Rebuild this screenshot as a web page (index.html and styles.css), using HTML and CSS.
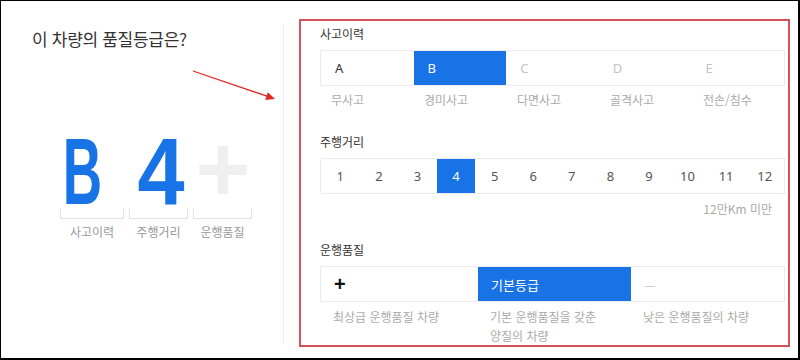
FILE: index.html
```html
<!DOCTYPE html>
<html lang="ko">
<head>
<meta charset="utf-8">
<title>품질등급</title>
<link rel="stylesheet" href="styles.css">
</head>
<body>
<div class="frame">
  <div class="left">
    <div class="title">이 차량의 품질등급은?</div>
    <div class="grades">
      <div class="grade g1">
        <div class="glyph"><span class="ch ch-b">B</span></div>
        <div class="bracket"></div>
        <div class="glabel">사고이력</div>
      </div>
      <div class="grade g2">
        <div class="glyph"><span class="ch ch-4">4</span></div>
        <div class="bracket"></div>
        <div class="glabel">주행거리</div>
      </div>
      <div class="grade g3">
        <div class="glyph"><span class="ch ch-plus">+</span></div>
        <div class="bracket"></div>
        <div class="glabel">운행품질</div>
      </div>
    </div>
  </div>
  <div class="divider"></div>
  <div class="panel">
    <div class="ph">사고이력</div>
    <div class="grid g5">
      <div class="cell dark">A</div>
      <div class="cell on">B</div>
      <div class="cell light">C</div>
      <div class="cell light">D</div>
      <div class="cell light">E</div>
    </div>
    <div class="labs g5">
      <div>무사고</div>
      <div>경미사고</div>
      <div>다면사고</div>
      <div>골격사고</div>
      <div>전손/침수</div>
    </div>

    <div class="ph ph2">주행거리</div>
    <div class="grid g12">
      <div class="num">1</div><div class="num">2</div><div class="num">3</div><div class="num on">4</div>
      <div class="num">5</div><div class="num">6</div><div class="num">7</div><div class="num">8</div>
      <div class="num">9</div><div class="num">10</div><div class="num">11</div><div class="num">12</div>
    </div>
    <div class="note">12만Km 미만</div>

    <div class="ph ph3">운행품질</div>
    <div class="grid g3c">
      <div class="cell q plus">+</div>
      <div class="cell q on">기본등급</div>
      <div class="cell q light">—</div>
    </div>
    <div class="labs labs3 g3c">
      <div>최상급 운행품질 차량</div>
      <div>기본 운행품질을 갖춘<br>양질의 차량</div>
      <div>낮은 운행품질의 차량</div>
    </div>
  </div>
  <svg class="arrow" width="90" height="38" viewBox="0 0 90 38">
    <line x1="3" y1="4" x2="77" y2="29.2" stroke="#e02828" stroke-width="1.3"/>
    <polygon points="85,32 75.2,32.9 77.8,25.3" fill="#e02828"/>
  </svg>
</div>
</body>
</html>
```
FILE: styles.css
```css
* { box-sizing: border-box; }
html, body { margin: 0; padding: 0; background: #fff; }
body { font-family: "Noto Sans CJK KR", "Noto Sans", sans-serif; }

.frame {
  position: relative;
  width: 800px;
  height: 360px;
  border-style: solid;
  border-color: #000;
  border-width: 1px 2px 2px 1px;
  display: flex;
  align-items: flex-start;
  background: #fff;
}

.left { width: 282px; }
.title {
  margin-top: 26px;
  padding-left: 31px;
  font-size: 17px;
  line-height: 24px;
  color: #333;
  letter-spacing: -0.3px;
}

.grades {
  margin-top: 86px;
  padding-left: 59px;
  display: flex;
  gap: 5px;
}
.grade { display: flex; flex-direction: column; }
.g1 { width: 64px; }
.g2 { width: 59px; }
.g3 { width: 59px; }
.glyph {
  height: 70px;
  line-height: 70px;
  display: flex;
  justify-content: center;
  font-family: "Liberation Sans", Arial, sans-serif;
  font-weight: 700;
  font-size: 94px;
  color: #1873e6;
}
.ch { display: inline-block; }
.ch-b { transform: translateX(-9.5px) scaleX(0.58); }
.ch-4 { transform: translateX(3px) scaleX(0.9); }
.ch-plus { color: #efefef; transform: translate(0.5px, -3px); }
.bracket {
  margin-top: 2px;
  height: 10px;
  border: 1px solid #e2e2e2;
  border-top: none;
}
.glabel {
  margin-top: 5px;
  font-size: 12px;
  line-height: 16px;
  color: #999;
  text-align: center;
}

.divider {
  margin-top: 23px;
  width: 1px;
  height: 320px;
  background: #eeeeee;
}

.panel {
  margin-top: 18px;
  margin-left: 15px;
  width: 491px;
  height: 328px;
  border: 2px solid #d4525b;
  padding: 5px 3px 0 19px;
}
.ph {
  font-size: 12px;
  line-height: 16px;
  color: #333;
}
.ph2 { margin-top: 26px; }
.ph3 { margin-top: 25px; }

.grid {
  margin-top: 8px;
  height: 36px;
  border: 1px solid #ececec;
  display: grid;
}
.g5 { grid-template-columns: repeat(5, 1fr); }
.g12 { grid-template-columns: repeat(12, 1fr); }
.g3c { grid-template-columns: 157px 153px 1fr; }

.cell {
  display: flex;
  align-items: center;
  padding-left: 14px;
  font-family: "Noto Sans", "Noto Sans CJK KR", sans-serif;
  font-size: 13px;
  color: #333;
}
.cell.light { color: #c4c4c4; }
.cell.q { padding-left: 13px; font-family: "Noto Sans CJK KR", sans-serif; }
.cell.plus { font-size: 20px; font-weight: 700; color: #111; font-family: "Liberation Sans", sans-serif; }
.on { background: #1873e6; color: #fff !important; }

.num {
  display: flex;
  align-items: center;
  justify-content: center;
  font-family: "Noto Sans", sans-serif;
  font-size: 13px;
  color: #555;
}

.labs {
  margin-top: 6px;
  display: grid;
  font-size: 12px;
  line-height: 16px;
  color: #aaa;
}
.labs > div { padding-left: 11px; }
.labs3 { margin-top: 5px; line-height: 19px; }
.labs3 > div { padding-left: 13px; }

.note {
  margin-top: 7px;
  font-size: 12px;
  line-height: 16px;
  color: #aaa;
  text-align: right;
  padding-right: 13px;
}

.arrow { position: absolute; left: 189px; top: 66px; }
```
